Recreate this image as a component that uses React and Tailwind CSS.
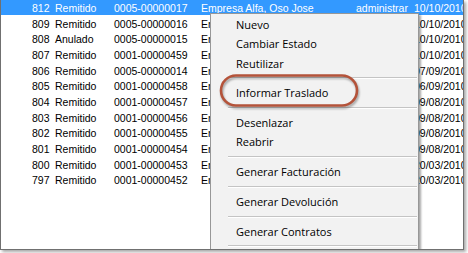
import React from 'react';

const rows = [
    { num: '812', estado: 'Remitido', codigo: '0005-00000017', fecha: '10/10/2010' },
    { num: '809', estado: 'Remitido', codigo: '0005-00000016', fecha: '10/10/2010' },
    { num: '808', estado: 'Anulado', codigo: '0005-00000015', fecha: '10/10/2010' },
    { num: '807', estado: 'Remitido', codigo: '0001-00000459', fecha: '10/10/2010' },
    { num: '806', estado: 'Remitido', codigo: '0005-00000014', fecha: '07/09/2010' },
    { num: '805', estado: 'Remitido', codigo: '0001-00000458', fecha: '06/09/2010' },
    { num: '804', estado: 'Remitido', codigo: '0001-00000457', fecha: '09/08/2010' },
    { num: '803', estado: 'Remitido', codigo: '0001-00000456', fecha: '09/08/2010' },
    { num: '802', estado: 'Remitido', codigo: '0001-00000455', fecha: '09/08/2010' },
    { num: '801', estado: 'Remitido', codigo: '0001-00000454', fecha: '09/08/2010' },
    { num: '800', estado: 'Remitido', codigo: '0001-00000453', fecha: '20/03/2010' },
    { num: '797', estado: 'Remitido', codigo: '0001-00000452', fecha: '20/03/2010' },
];

// null = separador
const menu = [
    'Nuevo',
    'Cambiar Estado',
    'Reutilizar',
    null,
    'Informar Traslado',
    null,
    'Desenlazar',
    'Reabrir',
    null,
    'Generar Facturación',
    null,
    'Generar Devolución',
    null,
    'Generar Contratos',
    null,
];

function Row({ row, selected }) {
    return (
        <div className={'flex h-[15.67px] pt-[4px] leading-[11.67px] pl-[31px] whitespace-nowrap '
            + (selected ? 'bg-[#3399ff] text-white' : 'text-black')}>
            <div className="w-[23px]">{row.num}</div>
            <div className="w-[59px]">{row.estado}</div>
            <div className="w-[87px]">{row.codigo}</div>
            <div className="w-[155px]">Empresa Alfa, Oso Jose</div>
            <div className="w-[58px] overflow-hidden">administrar</div>
            <div className="flex-1 overflow-hidden">{row.fecha}</div>
        </div>
    );
}

export default function App() {
    return (
        <div className="w-[468px] h-[253px] bg-white">
            <div className="relative w-[464px] h-[250px] overflow-hidden bg-white border-l border-r border-b border-[#707070] shadow-[2px_2px_3px_rgba(0,0,0,0.35)]"
                 style={{ fontFamily: '"Liberation Sans", Arial, sans-serif' }}>
                <div className="-mt-[1px] text-[10.5px]">
                    {rows.map((r, i) => <Row key={r.num} row={r} selected={i === 0} />)}
                </div>

                <div className="absolute left-[209px] top-[13px] w-[209px] bg-[#f2f2f2] border border-[#979797] py-[1px] shadow-[2px_2px_2px_rgba(0,0,0,0.35)]"
                     style={{ fontFamily: '"Open Sans", "Noto Sans", sans-serif' }}>
                    {menu.map((item, i) => item ? (
                        <div key={i} className="h-[19.3px] leading-[19.3px] pl-[25px] text-[11px] text-black">{item}</div>
                    ) : (
                        <div key={i} className="h-[10.5px] flex flex-col justify-center ml-[17px] mr-[1px]">
                            <div className="h-[1px] bg-[#c4c4c4]" />
                            <div className="h-[1px] bg-white" />
                        </div>
                    ))}
                </div>

                <svg className="absolute left-[216px] top-[72px] drop-shadow-[1px_2px_1px_rgba(0,0,0,0.35)]" width="146" height="38" viewBox="0 0 146 38">
                    <rect x="4" y="3.5" width="136" height="30" rx="15" ry="15" fill="none" stroke="#b4533a" strokeWidth="2.6" />
                </svg>
            </div>
        </div>
    );
}
